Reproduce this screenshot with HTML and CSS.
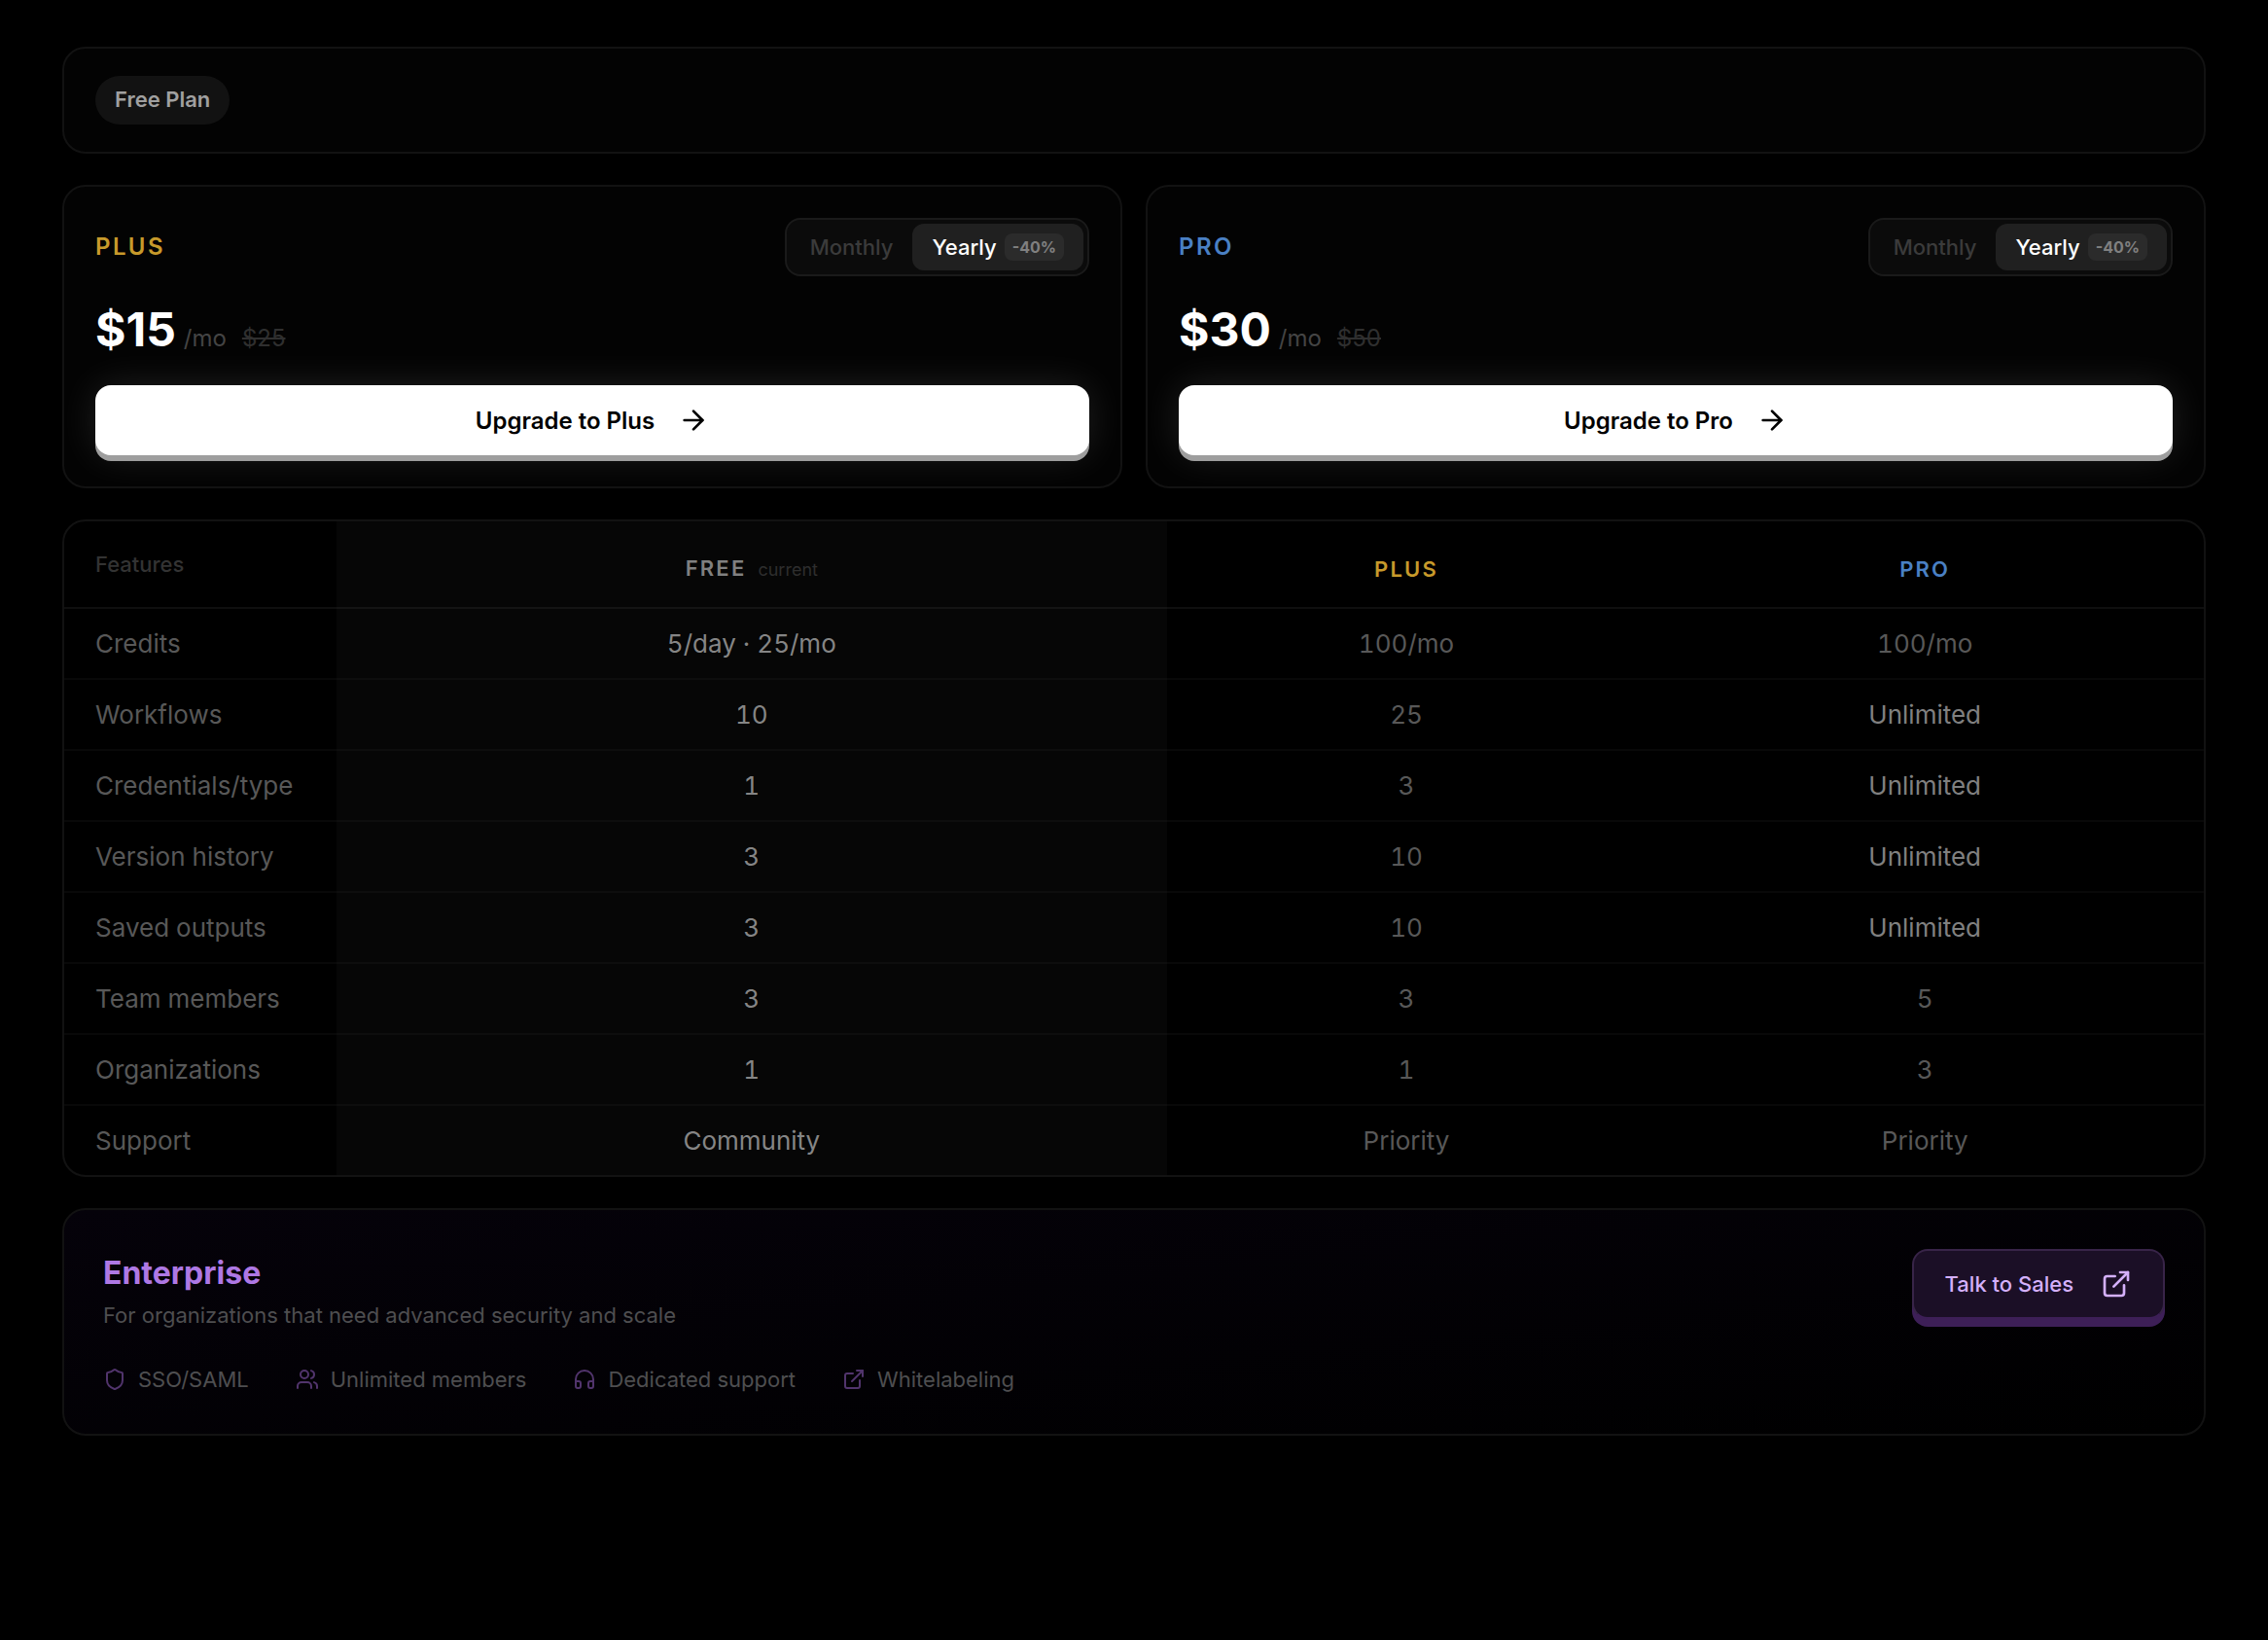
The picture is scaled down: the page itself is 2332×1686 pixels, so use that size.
FILE: index.html
```html
<!DOCTYPE html>
<html lang="en">
<head>
    <meta charset="UTF-8">
    <meta name="viewport" content="width=device-width, initial-scale=1.0">
    <title>Plans</title>
    <link rel="stylesheet" href="styles.css">
</head>
<body>
    <main class="page">
        <section class="card current-plan">
            <span class="pill">Free Plan</span>
        </section>

        <div class="plans">
            <section class="card plan">
                <div class="plan-head">
                    <h2 class="plan-name plus">PLUS</h2>
                    <div class="toggle">
                        <button type="button" class="toggle-btn">Monthly</button>
                        <button type="button" class="toggle-btn active">Yearly <span class="badge">-40%</span></button>
                    </div>
                </div>
                <div class="price">
                    <span class="amount">$15</span>
                    <span class="period">/mo</span>
                    <s class="old-price">$25</s>
                </div>
                <button type="button" class="upgrade">
                    Upgrade to Plus
                    <svg class="btn-icon" viewBox="0 0 24 24"><path d="M5 12h14"/><path d="m12 5 7 7-7 7"/></svg>
                </button>
            </section>

            <section class="card plan">
                <div class="plan-head">
                    <h2 class="plan-name pro">PRO</h2>
                    <div class="toggle">
                        <button type="button" class="toggle-btn">Monthly</button>
                        <button type="button" class="toggle-btn active">Yearly <span class="badge">-40%</span></button>
                    </div>
                </div>
                <div class="price">
                    <span class="amount">$30</span>
                    <span class="period">/mo</span>
                    <s class="old-price">$50</s>
                </div>
                <button type="button" class="upgrade">
                    Upgrade to Pro
                    <svg class="btn-icon" viewBox="0 0 24 24"><path d="M5 12h14"/><path d="m12 5 7 7-7 7"/></svg>
                </button>
            </section>
        </div>

        <section class="card compare">
            <table class="features">
                <colgroup>
                    <col class="col-name">
                    <col class="col-free">
                    <col class="col-plus">
                    <col class="col-pro">
                </colgroup>
                <thead>
                    <tr>
                        <th class="label" scope="col">Features</th>
                        <th scope="col"><span class="tier">FREE</span><span class="current">current</span></th>
                        <th scope="col"><span class="tier plus">PLUS</span></th>
                        <th scope="col"><span class="tier pro">PRO</span></th>
                    </tr>
                </thead>
                <tbody>
                    <tr><th scope="row">Credits</th><td class="mine">5/day · 25/mo</td><td>100/mo</td><td>100/mo</td></tr>
                    <tr><th scope="row">Workflows</th><td class="mine">10</td><td>25</td><td class="best">Unlimited</td></tr>
                    <tr><th scope="row">Credentials/type</th><td class="mine">1</td><td>3</td><td class="best">Unlimited</td></tr>
                    <tr><th scope="row">Version history</th><td class="mine">3</td><td>10</td><td class="best">Unlimited</td></tr>
                    <tr><th scope="row">Saved outputs</th><td class="mine">3</td><td>10</td><td class="best">Unlimited</td></tr>
                    <tr><th scope="row">Team members</th><td class="mine">3</td><td>3</td><td>5</td></tr>
                    <tr><th scope="row">Organizations</th><td class="mine">1</td><td>1</td><td>3</td></tr>
                    <tr><th scope="row">Support</th><td class="mine">Community</td><td>Priority</td><td>Priority</td></tr>
                </tbody>
            </table>
        </section>

        <section class="card enterprise">
            <div class="enterprise-info">
                <h2 class="enterprise-title">Enterprise</h2>
                <p class="enterprise-text">For organizations that need advanced security and scale</p>
                <ul class="perks">
                    <li class="perk">
                        <svg class="perk-icon" viewBox="0 0 24 24"><path d="M20 13c0 5-3.5 7.5-7.66 8.95a1 1 0 0 1-.67-.01C7.5 20.5 4 18 4 13V6a1 1 0 0 1 1-1c2 0 4.500-1.200 6.240-2.720a1.170 1.170 0 0 1 1.520 0C14.510 3.810 17 5 19 5a1 1 0 0 1 1 1z"/></svg>
                        SSO/SAML
                    </li>
                    <li class="perk">
                        <svg class="perk-icon" viewBox="0 0 24 24"><path d="M16 21v-2a4 4 0 0 0-4-4H6a4 4 0 0 0-4 4v2"/><circle cx="9" cy="7" r="4"/><path d="M22 21v-2a4 4 0 0 0-3-3.870"/><path d="M16 3.130a4 4 0 0 1 0 7.750"/></svg>
                        Unlimited members
                    </li>
                    <li class="perk">
                        <svg class="perk-icon" viewBox="0 0 24 24"><path d="M3 14h3a2 2 0 0 1 2 2v3a2 2 0 0 1-2 2H5a2 2 0 0 1-2-2v-7a9 9 0 0 1 18 0v7a2 2 0 0 1-2 2h-1a2 2 0 0 1-2-2v-3a2 2 0 0 1 2-2h3"/></svg>
                        Dedicated support
                    </li>
                    <li class="perk">
                        <svg class="perk-icon" viewBox="0 0 24 24"><path d="M15 3h6v6"/><path d="M10 14 21 3"/><path d="M18 13v6a2 2 0 0 1-2 2H5a2 2 0 0 1-2-2V8a2 2 0 0 1 2-2h6"/></svg>
                        Whitelabeling
                    </li>
                </ul>
            </div>
            <button type="button" class="sales">
                Talk to Sales
                <svg class="btn-icon" viewBox="0 0 24 24"><path d="M15 3h6v6"/><path d="M10 14 21 3"/><path d="M18 13v6a2 2 0 0 1-2 2H5a2 2 0 0 1-2-2V8a2 2 0 0 1 2-2h6"/></svg>
            </button>
        </section>
    </main>
</body>
</html>
```
FILE: styles.css
```css
* {
    box-sizing: border-box;
}

body {
    margin: 0;
    background: #000;
    color: #fff;
    font-family: Inter, "Liberation Sans", sans-serif;
    font-size: 22px;
    line-height: 32px;
}

h2,
p,
ul {
    margin: 0;
    padding: 0;
}

button {
    font-family: inherit;
    border: none;
    cursor: pointer;
}

svg {
    fill: none;
    stroke: currentColor;
    stroke-width: 2;
    stroke-linecap: round;
    stroke-linejoin: round;
    flex-shrink: 0;
}

.page {
    display: flex;
    flex-direction: column;
    gap: 32px;
    padding: 48px 64px;
}

.card {
    background: #030303;
    border: 2px solid #121212;
    border-radius: 24px;
}

/* Current plan */
.current-plan {
    display: flex;
    padding: 28px 32px;
}

.pill {
    padding: 8px 20px 10px;
    border-radius: 25px;
    background: #121212;
    color: #a0a0a0;
    font-weight: 600;
}

/* Plan cards */
.plans {
    display: grid;
    grid-template-columns: 1fr 1fr;
    gap: 24px;
}

.plan {
    padding: 32px;
}

.plan-head {
    display: flex;
    justify-content: space-between;
    align-items: center;
}

.plan-name {
    font-size: 24px;
    font-weight: 600;
    letter-spacing: 0.1em;
}

.plus {
    color: #c79a2b;
}

.pro {
    color: #4a80c4;
}

.toggle {
    display: flex;
    padding: 4px;
    border: 2px solid #1a1a1a;
    border-radius: 16px;
    background: #0b0b0b;
}

.toggle-btn {
    display: flex;
    align-items: center;
    gap: 8px;
    height: 48px;
    padding: 0 20px;
    border-radius: 12px;
    background: none;
    color: #3b3b3b;
    font-size: 22px;
    font-weight: 500;
}

.toggle-btn.active {
    background: #202020;
    color: #fff;
}

.badge {
    padding: 0 8px;
    border-radius: 8px;
    background: #2b2b2b;
    color: #808080;
    font-size: 16px;
    font-weight: 700;
    line-height: 28px;
}

.price {
    display: flex;
    align-items: baseline;
    margin: 31px 0 24px;
    line-height: 48px;
}

.amount {
    font-size: 48px;
    font-weight: 700;
}

.period {
    margin-left: 8px;
    color: #444;
    font-size: 24px;
}

.old-price {
    margin-left: 16px;
    color: #2f2f2f;
    font-size: 24px;
}

.upgrade {
    display: flex;
    justify-content: center;
    align-items: center;
    gap: 24px;
    width: 100%;
    height: 72px;
    border-radius: 16px;
    background: #fff;
    color: #000;
    font-size: 24px;
    font-weight: 600;
    box-shadow: 0 6px 0 #9e9e9e, 0 0 40px rgba(255, 255, 255, 0.12);
}

.btn-icon {
    width: 32px;
    height: 32px;
}

/* Comparison table */
.compare {
    overflow: hidden;
    background: #000;
}

.features {
    width: 100%;
    table-layout: fixed;
    border-spacing: 0;
    font-size: 26px;
    font-variant-numeric: tabular-nums;
    text-align: center;
}

.col-name {
    width: 280px;
}

.col-free {
    width: 38.8%;
    background: #060606;
}

.col-plus {
    width: 22.4%;
}

.features th,
.features td {
    height: 73px;
    padding: 0 32px;
    border-bottom: 2px solid rgba(255, 255, 255, 0.03);
    color: #585858;
    font-weight: 400;
}

.features tbody th {
    text-align: left;
    white-space: nowrap;
}

.features thead th {
    height: 90px;
    padding-top: 8px;
    border-bottom-color: rgba(255, 255, 255, 0.06);
}

.features thead .label {
    padding-top: 0;
    color: #333;
    font-size: 22px;
    font-weight: 500;
    text-align: left;
}

.features tbody tr:last-child > * {
    height: 71px;
    border-bottom: none;
}

.features .mine {
    color: #858585;
}

.features .best {
    color: #808080;
}

.tier {
    font-size: 22px;
    font-weight: 600;
    letter-spacing: 0.1em;
}

.tier:not(.plus, .pro) {
    color: #808080;
}

.current {
    margin-left: 12px;
    color: #2e2e2e;
    font-size: 18px;
}

/* Enterprise */
.enterprise {
    display: flex;
    justify-content: space-between;
    align-items: flex-start;
    padding: 40px;
    background: linear-gradient(to bottom right, #05020a, #000);
}

.enterprise-title {
    color: #ae78e4;
    font-size: 32px;
    font-weight: 700;
    line-height: 50px;
}

.enterprise-text {
    margin-top: 2px;
    color: #4e4e50;
}

.perks {
    display: flex;
    gap: 48px;
    margin-top: 34px;
    list-style: none;
}

.perk {
    display: flex;
    align-items: center;
    gap: 12px;
    color: #4e4e50;
}

.perk-icon {
    width: 24px;
    height: 24px;
    color: #51346c;
}

.sales {
    display: flex;
    align-items: center;
    gap: 28px;
    height: 72px;
    padding: 0 32px;
    border: 2px solid #382448;
    border-bottom-color: #3d1f57;
    border-radius: 16px;
    background: #1b0f26;
    color: #d4b0fa;
    font-size: 22px;
    font-weight: 500;
    box-shadow: 0 8px 0 #3d1f57;
}
```
